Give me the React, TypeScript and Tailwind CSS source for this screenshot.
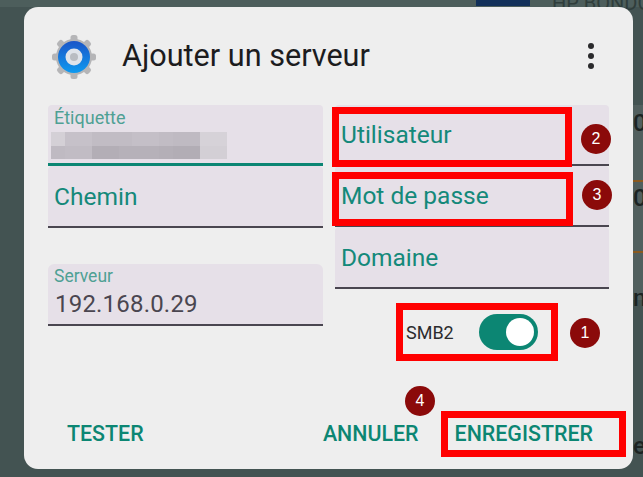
const font = { fontFamily: "Roboto, 'Liberation Sans', sans-serif" };

const mosaicTop = ["#d4d0d6", "#c6c1c9", "#c6c1c9", "#c1bcc4", "#c1bcc4", "#c1bcc4", "#c4bfc7", "#c4bfc7", "#c1bcc4", "#bfbac2", "#bfbac2", "#d6d2d8", "#d6d2d8"];
const mosaicBottom = ["#bfbac2", "#c1bcc4", "#c1bcc4", "#b3aeb6", "#b3aeb6", "#b6b1b9", "#b6b1b9", "#b6b1b9", "#b4afb7", "#b2adb5", "#b2adb5", "#d3cfd5", "#d3cfd5"];

function Gear() {
  const teeth = [0, 45, 90, 135, 180, 225, 270, 315];
  return (
    <svg width="46" height="46" viewBox="0 0 46 46" className="shrink-0">
      <defs>
        <linearGradient id="ring" x1="0" y1="0" x2="0" y2="1">
          <stop offset="0" stopColor="#1a55c8" />
          <stop offset="1" stopColor="#0e9af0" />
        </linearGradient>
      </defs>
      {teeth.map((a) => (
        <rect key={a} x="19.5" y="1" width="7" height="9" rx="2.5" fill="#b5b5b7" transform={`rotate(${a} 23 23)`} />
      ))}
      <circle cx="23" cy="23" r="18" fill="#b5b5b7" />
      <circle cx="23" cy="23" r="16" fill="url(#ring)" />
      <circle cx="23" cy="23" r="8.5" fill="#dfe3ea" />
      <circle cx="23" cy="23" r="4" fill="#b9bcc2" />
    </svg>
  );
}

function Badge({ n, className }: { n: number; className: string }) {
  return (
    <div className={`absolute flex h-[30px] w-[30px] items-center justify-center rounded-full bg-[#8b0a0a] text-[16px] text-white ${className}`} style={{ fontFamily: "'Liberation Sans', sans-serif" }}>
      {n}
    </div>
  );
}

function Field({ label, className }: { label: string; className: string }) {
  return (
    <div className={`flex items-center rounded-t-[4px] border-b-2 border-[#4a4650] bg-[#e6e0e8] px-[6px] pt-[2px] text-[24.5px] text-[#14897a] ${className}`}>
      {label}
    </div>
  );
}

export default function App() {
  return (
    <div className="relative h-[477px] w-[643px] overflow-hidden bg-[#435352]" style={font}>
      <div className="absolute left-0 top-0 h-[7px] w-full bg-[#4d5e5c]" />
      <div className="absolute right-0 top-[105px] h-[195px] w-[10px] bg-[#515f5e]" />
      <div className="absolute left-[476px] top-0 h-[6px] w-[54px] bg-[#12305a]" />
      <div className="absolute left-[552px] top-[-12px] whitespace-nowrap text-[20px] text-[#2f3d3b]">HP BONDO</div>
      <div className="absolute left-[633px] top-[105px] whitespace-nowrap text-[24px] font-medium text-[#1c2423]">0.</div>
      <div className="absolute left-[633px] top-[180px] whitespace-nowrap text-[24px] font-medium text-[#1c2423]">0.</div>
      <div className="absolute left-[633px] top-[280px] text-[24px] font-medium text-[#1c2423]">n</div>
      <div className="absolute left-[633px] top-[428px] text-[24px] font-medium text-[#1c2423]">e</div>
      <div className="absolute left-[633px] top-[180px] h-[2px] w-[10px] bg-[#8a5a20]" />
      <div className="absolute left-[633px] top-[251px] h-[2px] w-[10px] bg-[#8a5a20]" />

      <div className="relative flex h-full w-full items-start pl-[24px] pt-[7px]">
        <div className="flex h-[462px] w-[609px] flex-col rounded-[14px] bg-[#eeeeee] pl-[24px] pr-[24px]">
          <div className="flex h-[98px] items-center">
            <div className="ml-[3px] mt-[2px]"><Gear /></div>
            <div className="ml-[25px] text-[30.6px] text-[#1c1c1e]">Ajouter un serveur</div>
            <div className="ml-auto mr-[15px] flex flex-col gap-[4px]">
              <span className="h-[6px] w-[6px] rounded-full bg-[#2a2a2c]" />
              <span className="h-[6px] w-[6px] rounded-full bg-[#2a2a2c]" />
              <span className="h-[6px] w-[6px] rounded-full bg-[#2a2a2c]" />
            </div>
          </div>

          <div className="flex gap-[12px]">
            <div className="flex w-[275px] flex-col">
              <div className="relative h-[61px] rounded-t-[4px] border-b-[3px] border-[#0c8673] bg-[#e6e0e8] px-[6px] pt-[2px]">
                <div className="text-[18px] leading-[21px] text-[#4fa094]">Étiquette</div>
                <div className="absolute left-[3px] top-[27px] grid h-[27px] w-[176px] grid-cols-[repeat(13,1fr)]">
                  {mosaicTop.map((c, i) => <div key={i} style={{ backgroundColor: c }} />)}
                  {mosaicBottom.map((c, i) => <div key={i} style={{ backgroundColor: c }} />)}
                </div>
              </div>
              <Field label="Chemin" className="h-[62px]" />
              <div className="mt-[36px] flex h-[62px] flex-col rounded-t-[6px] border-b-2 border-[#4a4650] bg-[#e6e0e8] px-[7px] pt-[2px]">
                <div className="-ml-[1px] text-[17.5px] leading-[20px] text-[#4fa094]">Serveur</div>
                <div className="mt-[3px] text-[24px] leading-[31px] tracking-[0.2px] text-[#4a4650]">192.168.0.29</div>
              </div>
            </div>

            <div className="relative flex w-[274px] flex-col">
              <Field label="Utilisateur" className="h-[61px]" />
              <Field label="Mot de passe" className="h-[61px]" />
              <Field label="Domaine" className="h-[62px]" />
              <div className="mt-[25px] ml-[71px] flex items-center">
                <span className="text-[18px] text-[#2c2c2e]">SMB2</span>
                <div className="ml-[25px] flex h-[36px] w-[59px] items-center justify-end rounded-full bg-[#0c8673] pr-[4px]">
                  <div className="h-[28px] w-[28px] rounded-full bg-white" />
                </div>
              </div>
            </div>
          </div>

          <div className="mt-auto flex h-[51px] items-start text-[21.4px] font-medium text-[#0c8673]">
            <span className="ml-[19px]">TESTER</span>
            <span className="ml-auto">ANNULER</span>
            <span className="ml-[36px] mr-[16px]">ENREGISTRER</span>
          </div>
        </div>
      </div>

      <div className="pointer-events-none absolute left-[332px] top-[107px] h-[60px] w-[240px] border-[7px] border-[#ff0000]" />
      <div className="pointer-events-none absolute left-[332px] top-[172px] h-[54px] w-[241px] border-[7px] border-[#ff0000]" />
      <div className="pointer-events-none absolute left-[396px] top-[303px] h-[58px] w-[162px] border-[7px] border-[#ff0000]" />
      <div className="pointer-events-none absolute left-[441px] top-[411px] h-[46px] w-[185px] border-[7px] border-[#ff0000]" />

      <Badge n={2} className="left-[581px] top-[124px]" />
      <Badge n={3} className="left-[582px] top-[180px]" />
      <Badge n={1} className="left-[570px] top-[318px]" />
      <Badge n={4} className="left-[405px] top-[386px]" />
    </div>
  );
}
